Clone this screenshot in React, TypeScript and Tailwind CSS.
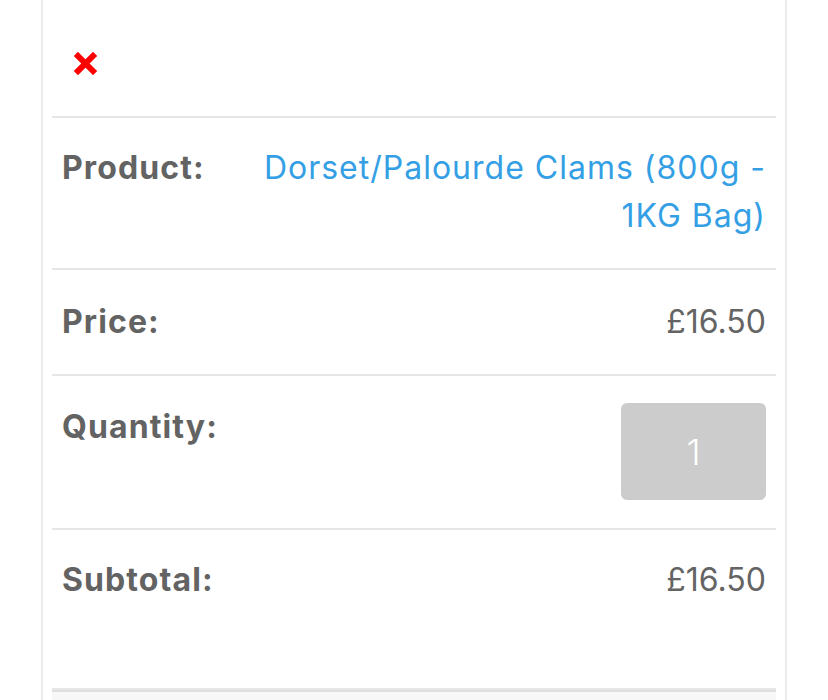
import React from "react";

const font = { fontFamily: "Inter, 'DejaVu Sans', sans-serif" };

function Row({
  label,
  children,
  className = "",
}: {
  label: string;
  children: React.ReactNode;
  className?: string;
}) {
  return (
    <div
      className={`flex items-start justify-between border-b-2 border-[#e6e6e6] px-[10px] ${className}`}
    >
      <span className="w-[200px] shrink-0 text-[32px] font-bold leading-[48px] tracking-[1.1px] text-[#636363]">
        {label}
      </span>
      {children}
    </div>
  );
}

export default function App() {
  return (
    <div className="min-h-[700px] bg-white" style={font}>
      <div className="mx-[41px] h-[700px] overflow-hidden border-x-2 border-[#ebebeb] px-[9px]">
        {/* remove */}
        <div className="flex h-[118px] items-start border-b-2 border-[#e6e6e6] pl-[22px] pt-[52px]">
          <svg width="23" height="23" viewBox="0 0 23 23">
            <path
              d="M4 4 L19 19 M19 4 L4 19"
              stroke="#ff0000"
              strokeWidth="6"
              strokeLinecap="square"
            />
          </svg>
        </div>

        <Row label="Product:" className="h-[152px] pt-[26px]">
          <a className="flex-1 text-right text-[32px] leading-[48px] tracking-[1px] text-[#349fe5]">
            Dorset/Palourde Clams (800g - 1KG Bag)
          </a>
        </Row>

        <Row label="Price:" className="h-[106px] pt-[28px]">
          <span className="text-right text-[32px] leading-[48px] text-[#646464]">
            £16.50
          </span>
        </Row>

        <Row label="Quantity:" className="h-[154px] pt-[27px]">
          <div className="flex h-[97px] w-[145px] items-center justify-center rounded-[6px] bg-[#cccccc] text-[36px] font-light text-white">
            1
          </div>
        </Row>

        <Row label="Subtotal:" className="h-[160px] pt-[26px]">
          <span className="text-right text-[32px] leading-[48px] text-[#646464]">
            £16.50
          </span>
        </Row>

        <div className="h-[20px] border-t-2 border-[#dedede] bg-[#f7f7f7]" />
      </div>
    </div>
  );
}
